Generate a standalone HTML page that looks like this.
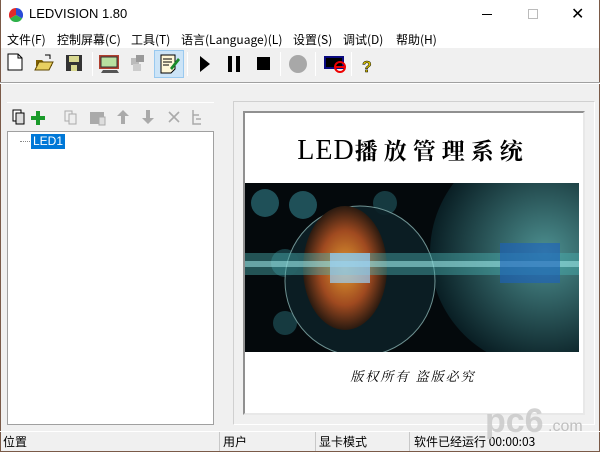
<!DOCTYPE html>
<html><head><meta charset="utf-8"><style>
*{margin:0;padding:0;box-sizing:border-box}
body{width:600px;height:452px;overflow:hidden;background:#f0f0f0;font-family:"Liberation Sans","Noto Sans CJK SC",sans-serif;font-size:12px;color:#000;position:relative}
.a{position:absolute}
.sep{position:absolute;top:52px;width:1px;height:24px;background:#a0a0a0;border-right:1px solid #fff}
.cjk{font-family:"Noto Sans CJK SC","Liberation Sans",sans-serif}
.serif{font-family:"Liberation Serif","Noto Serif CJK SC",serif}
.m{position:absolute;top:31px;font-size:12px;white-space:nowrap}
</style></head><body>
<div class="a" style="left:0;top:0;width:600px;height:48px;background:#fff"></div>
<div class="a" style="left:0;top:0;width:600px;height:452px;border:1px solid #7a5a48;border-top:none"></div>
<svg class="a" style="left:9px;top:8px" width="14" height="14" viewBox="0 0 14 14"><path d="M7 7L7 0A7 7 0 0 1 13.1 10.5Z" fill="#2a4bd8"/><path d="M7 7L13.1 10.5A7 7 0 0 1 0.9 10.5Z" fill="#2fb14a"/><path d="M7 7L0.9 10.5A7 7 0 0 1 7 0Z" fill="#e02a2a"/></svg>
<div class="a" style="left:29px;top:6px;font-size:13px">LEDVISION 1.80</div>
<div class="a" style="left:482px;top:14px;width:10px;height:1px;background:#000"></div>
<div class="a" style="left:528px;top:9px;width:10px;height:10px;border:1px solid #bbb"></div>
<div class="a" style="left:571px;top:4px;font-size:16px;font-weight:300">✕</div>
<div class="m cjk" style="left:7px">文件(F)</div>
<div class="m cjk" style="left:57px">控制屏幕(C)</div>
<div class="m cjk" style="left:131px">工具(T)</div>
<div class="m cjk" style="left:181px">语言(Language)(L)</div>
<div class="m cjk" style="left:293px">设置(S)</div>
<div class="m cjk" style="left:343px">调试(D)</div>
<div class="m cjk" style="left:396px">帮助(H)</div>
<div class="a" style="left:154px;top:50px;width:30px;height:28px;background:#cce4f7;border:1px solid #99c9ef"></div>
<svg class="a" style="left:0;top:48px" width="400" height="34">
<path d="M8 6h10l4 4v12H8z" fill="#fff" stroke="#000"/><path d="M18 6v4h4" fill="none" stroke="#000"/>
<path d="M36 12h6l2 2h8v4H36z" fill="#806000"/><path d="M35 22l4-8h14l-4 8z" fill="#e8d060" stroke="#604800"/><path d="M45 7l5 0 0 4" fill="none" stroke="#000"/>
<rect x="66" y="7" width="16" height="16" fill="#333"/><rect x="69" y="8" width="10" height="6" fill="#d8d890"/><rect x="71" y="17" width="6" height="6" fill="#d8d890"/>
<rect x="99" y="7" width="20" height="14" fill="#b04030" /><rect x="101" y="9" width="16" height="10" fill="#b8e0a0" stroke="#333"/><path d="M103 22h14l2 3H101z" fill="#555"/>
<rect x="131" y="10" width="8" height="7" fill="#bbb"/><rect x="136" y="7" width="8" height="7" fill="#999"/><rect x="133" y="16" width="8" height="7" fill="#ccc"/>
<path d="M161 7h14v14l-4 4h-10z" fill="#fff8d8" stroke="#000"/><path d="M163 11h9M163 14h9M163 17h6" stroke="#000"/><path d="M170 20l8-10 2 2-8 10z" fill="#1a8a2a"/>
<path d="M200 8l10 8-10 8z" fill="#000"/>
<rect x="228" y="8" width="4" height="16" fill="#000"/><rect x="236" y="8" width="4" height="16" fill="#000"/>
<rect x="257" y="9" width="13" height="13" fill="#000"/>
<circle cx="298" cy="16" r="9" fill="#a8a8a8"/>
<rect x="324" y="8" width="20" height="13" fill="#0a0a80"/><rect x="326" y="10" width="16" height="9" fill="#000"/><circle cx="340" cy="19" r="5" fill="none" stroke="#e00" stroke-width="2"/><rect x="336" y="18" width="8" height="2" fill="#e00"/>
<text x="362" y="24" font-size="16" font-weight="bold" fill="#d8c000" stroke="#000" stroke-width=".5" font-family="Liberation Sans">?</text>
</svg>
<div class="sep" style="left:92px"></div><div class="sep" style="left:187px"></div><div class="sep" style="left:280px"></div><div class="sep" style="left:315px"></div><div class="sep" style="left:351px"></div>
<div class="a" style="left:0;top:82px;width:600px;height:1px;background:#a0a0a0"></div>
<div class="a" style="left:0;top:83px;width:600px;height:1px;background:#fff"></div>
<div class="a" style="left:7px;top:102px;width:207px;height:1px;background:#a0a0a0;border-bottom:1px solid #fff"></div>
<svg class="a" style="left:8px;top:104px" width="206" height="26">
<rect x="5" y="6" width="8" height="11" fill="#fff" stroke="#000"/><rect x="8" y="9" width="8" height="11" fill="#ddd" stroke="#000"/>
<path d="M28 7h4v5h5v4h-5v5h-4v-5h-5v-4h5z" fill="#1a9a2a"/>
<rect x="57" y="7" width="7" height="10" fill="none" stroke="#aaa"/><rect x="61" y="10" width="7" height="10" fill="#eee" stroke="#aaa"/>
<rect x="82" y="8" width="14" height="12" fill="#aaa"/><rect x="91" y="13" width="6" height="8" fill="#ddd" stroke="#aaa"/>
<path d="M115 6l6 6h-4v8h-4v-8h-4z" fill="#aaa"/>
<path d="M140 20l6-6h-4v-8h-4v8h-4z" fill="#aaa"/>
<path d="M161 8l10 10M171 8l-10 10" stroke="#aaa" stroke-width="1.6"/>
<path d="M185 6v14h8M185 11h6M188 15h5" fill="none" stroke="#aaa" stroke-width="1.5"/>
</svg>
<div class="a" style="left:7px;top:131px;width:207px;height:294px;background:#fff;border:1px solid #a0a0a0"></div>
<div class="a" style="left:20px;top:141px;width:10px;border-top:1px dotted #888"></div>
<div class="a" style="left:31px;top:134px;height:15px;padding:0 2px;background:#0078d7;color:#fff;font-size:12px;line-height:15px">LED1</div>
<div class="a" style="left:233px;top:101px;width:362px;height:324px;border:1px solid #d0d0d0;border-right-color:#fff;border-bottom-color:#fff"></div>
<div class="a" style="left:243px;top:111px;width:342px;height:304px;background:#fff;border:2px solid #909090;border-right-color:#e8e8e8;border-bottom-color:#e8e8e8"></div>
<div class="a serif" style="left:245px;top:133px;width:336px;text-align:center;font-size:28px;letter-spacing:1px">LED<span style="font-size:23px;letter-spacing:6px;font-weight:bold">播放管理系统</span></div>
<svg class="a" style="left:245px;top:183px" width="334" height="169">
<defs><radialGradient id="g1" cx=".5" cy=".5" r=".5"><stop offset="0" stop-color="#e09a30"/><stop offset=".6" stop-color="#a04a20"/><stop offset="1" stop-color="#2a1a10"/></radialGradient>
<radialGradient id="g2" cx=".5" cy=".5" r=".5"><stop offset="0" stop-color="#5aa8a8"/><stop offset="1" stop-color="#0a2228"/></radialGradient></defs>
<rect width="334" height="169" fill="#04090c"/>
<circle cx="300" cy="70" r="115" fill="url(#g2)" opacity=".85"/>
<circle cx="20" cy="20" r="14" fill="#1f5058"/><circle cx="58" cy="22" r="14" fill="#1f5058"/><circle cx="140" cy="20" r="12" fill="#163a40"/>
<circle cx="40" cy="80" r="14" fill="#163a40"/><circle cx="40" cy="140" r="12" fill="#163a40"/>
<circle cx="115" cy="98" r="75" fill="#0c2026" stroke="#7aa0a0" opacity=".9"/>
<ellipse cx="100" cy="85" rx="42" ry="62" fill="url(#g1)"/>
<rect x="0" y="70" width="334" height="22" fill="#4ab0b0" opacity=".45"/>
<rect x="0" y="78" width="334" height="6" fill="#a0e8e8" opacity=".55"/>
<rect x="255" y="60" width="60" height="40" fill="#1a60c0" opacity=".6"/>
<rect x="85" y="70" width="40" height="30" fill="#9ad0f8" opacity=".7"/>
</svg>
<div class="a serif" style="left:245px;top:366px;width:336px;text-align:center;font-size:13px;font-style:italic;letter-spacing:2px">版权所有 盗版必究</div>
<div class="a" style="left:0;top:431px;width:600px;height:1px;background:#fff"></div>
<div class="a cjk" style="left:3px;top:433px;font-size:12px">位置</div>
<div class="a" style="left:219px;top:432px;width:1px;height:19px;background:#c8c8c8"></div>
<div class="a cjk" style="left:223px;top:433px;font-size:12px">用户</div>
<div class="a" style="left:315px;top:432px;width:1px;height:19px;background:#c8c8c8"></div>
<div class="a cjk" style="left:319px;top:433px;font-size:12px">显卡模式</div>
<div class="a" style="left:409px;top:432px;width:1px;height:19px;background:#c8c8c8"></div>
<div class="a cjk" style="left:414px;top:433px;font-size:12px">软件已经运行 00:00:03</div>
<div class="a" style="left:485px;top:402px;font-size:34px;font-weight:bold;color:#c8c8c8;opacity:.8">pc6</div>
<div class="a" style="left:548px;top:418px;font-size:16px;color:#c0c0c0">.com</div>
</body></html>
